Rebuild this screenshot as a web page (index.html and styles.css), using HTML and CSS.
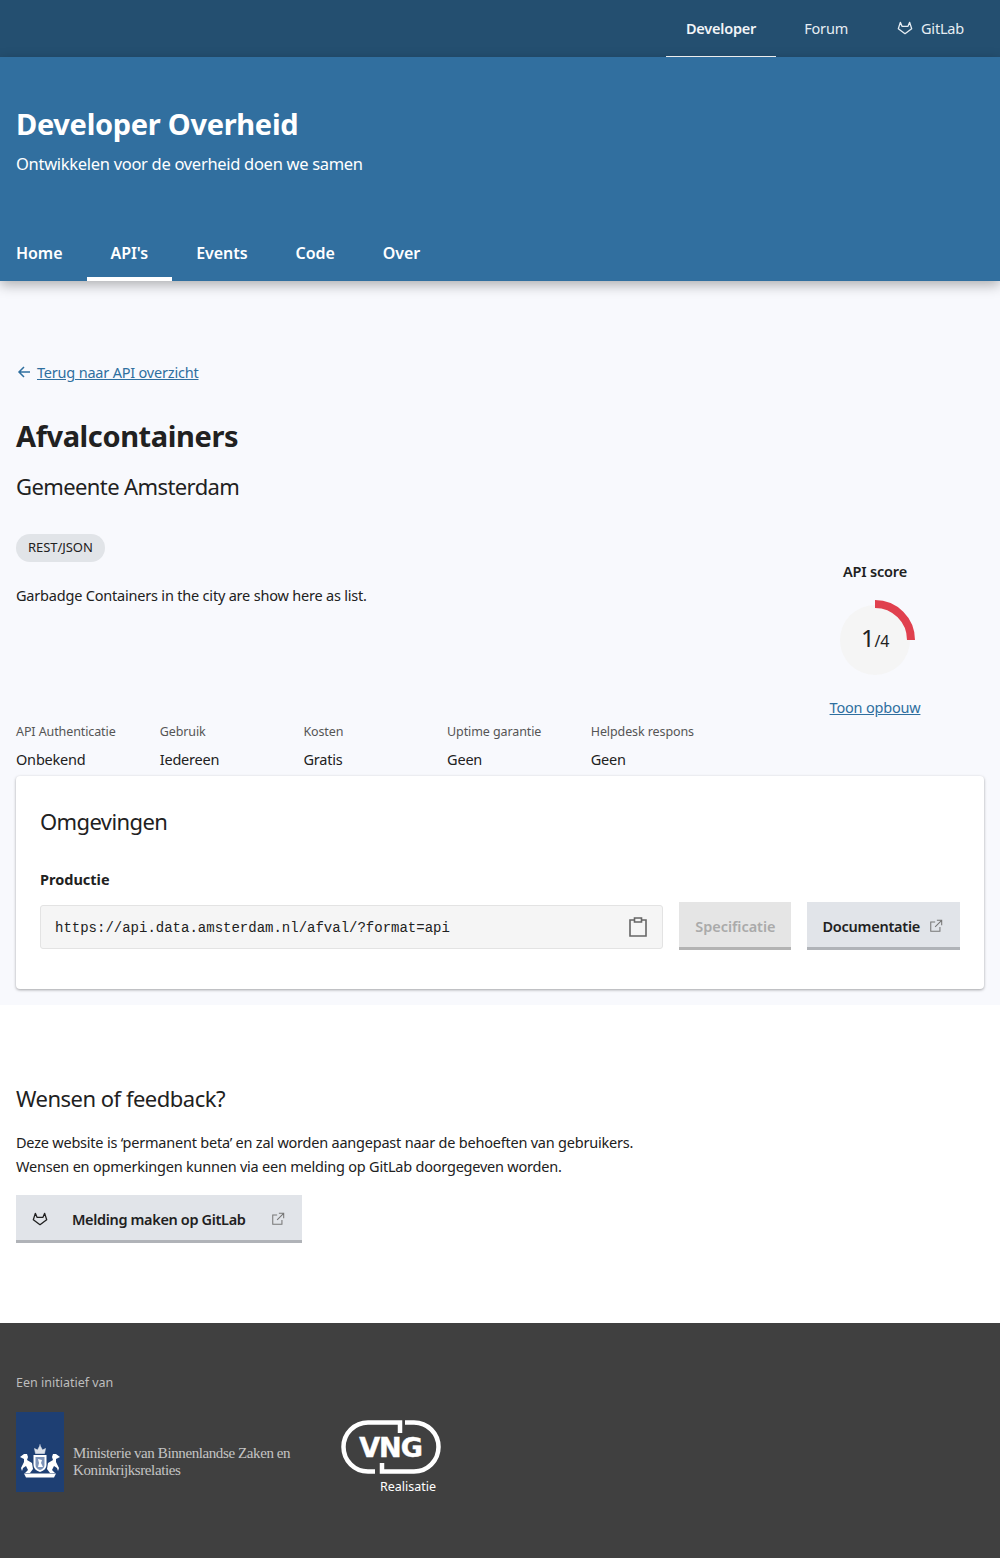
FILE: index.html
```html
<!DOCTYPE html>
<html>
<head>
  <title>Afvalcontainers - Developer Overheid</title>
  <link rel="stylesheet" href="styles.css">
</head>
<body>
  <svg class="defs" width="0" height="0">
    <symbol id="fox" viewBox="0 0 24 24">
      <path d="M5 3.5 L7.5 9.5 H16.5 L19 3.5 L22 13 L12 20.5 L2 13 Z" fill="none" stroke="currentColor" stroke-width="2" stroke-linejoin="round"/>
    </symbol>
    <symbol id="external" viewBox="0 0 16 16">
      <path d="M7 3.5 H2 V14 H12.5 V9 M9 1.5 H14.5 V7 M14.5 1.5 L7 9" fill="none" stroke="currentColor" stroke-width="1.2"/>
    </symbol>
  </svg>

  <div class="topbar">
    <a class="topbar-link active">Developer</a>
    <a class="topbar-link">Forum</a>
    <a class="topbar-link"><svg class="fox"><use href="#fox"/></svg>GitLab</a>
  </div>

  <header class="hero">
    <h1 class="site-title">Developer Overheid</h1>
    <p class="site-sub">Ontwikkelen voor de overheid doen we samen</p>
    <nav class="mainnav">
      <a class="mainnav-link">Home</a>
      <a class="mainnav-link active">API's</a>
      <a class="mainnav-link">Events</a>
      <a class="mainnav-link">Code</a>
      <a class="mainnav-link">Over</a>
    </nav>
  </header>

  <main class="content">
    <a class="back">
      <svg class="back-icon" viewBox="0 0 16 16"><path d="M14 8 H3 M8 3 L3 8 L8 13" fill="none" stroke="currentColor" stroke-width="1.5"/></svg>
      <span class="link">Terug naar API overzicht</span>
    </a>
    <h1 class="api-title">Afvalcontainers</h1>
    <h2 class="api-org">Gemeente Amsterdam</h2>

    <div class="summary">
      <div class="summary-left">
        <span class="pill">REST/JSON</span>
        <p class="desc">Garbadge Containers in the city are show here as list.</p>
      </div>
      <div class="score">
        <div class="score-title">API score</div>
        <div class="score-ring">
          <svg class="score-arc" viewBox="0 0 80 80"><circle cx="40" cy="40" r="35" fill="#f5f5f5"/><path d="M40 4 A36 36 0 0 1 76 40" fill="none" stroke="#e0404e" stroke-width="8"/></svg>
          <span class="score-num"><b>1</b>/4</span>
        </div>
        <a class="link score-link">Toon opbouw</a>
      </div>
    </div>

    <dl class="facts">
      <div class="fact"><dt>API Authenticatie</dt><dd>Onbekend</dd></div>
      <div class="fact"><dt>Gebruik</dt><dd>Iedereen</dd></div>
      <div class="fact"><dt>Kosten</dt><dd>Gratis</dd></div>
      <div class="fact"><dt>Uptime garantie</dt><dd>Geen</dd></div>
      <div class="fact"><dt>Helpdesk respons</dt><dd>Geen</dd></div>
    </dl>

    <section class="card">
      <h2 class="card-title">Omgevingen</h2>
      <h3 class="env-name">Productie</h3>
      <div class="env-row">
        <div class="url-box">
          <span class="url">https://api.data.amsterdam.nl/afval/?format=api</span>
          <svg class="clip" viewBox="0 0 18 20"><path d="M5.5 3 H1 V19 H17 V3 H12.5 M5.5 1 H12.5 V5 H5.5 Z" fill="none" stroke="currentColor" stroke-width="1.6"/></svg>
        </div>
        <a class="btn disabled">Specificatie</a>
        <a class="btn btn-doc">Documentatie<svg class="ext"><use href="#external"/></svg></a>
      </div>
    </section>
  </main>

  <section class="feedback">
    <h2 class="feedback-title">Wensen of feedback?</h2>
    <p class="feedback-text">Deze website is ‘permanent beta’ en zal worden aangepast naar de behoeften van gebruikers.<br>Wensen en opmerkingen kunnen via een melding op GitLab doorgegeven worden.</p>
    <a class="btn btn-wide"><svg class="fox"><use href="#fox"/></svg><span class="btn-label">Melding maken op GitLab</span><svg class="ext"><use href="#external"/></svg></a>
  </section>

  <footer class="footer">
    <p class="footer-intro">Een initiatief van</p>
    <div class="logos">
      <div class="rijk">
        <div class="rijk-flag">
          <svg class="arms" viewBox="0 0 42 36">
            <defs>
              <path id="lion" d="M1 13 L5 10 L8 10 L9 13 L8 16 L13 19 L14 25 L11 29 L6 29 L9 26 L7 22 L4 24 L3 27 L2 24 L5 18 L5 15 Z"/>
            </defs>
            <g fill="#fff">
              <path d="M21 0 V2 M16.5 9.5 L15.5 4.5 L18.5 6 L21 1.5 L23.5 6 L26.5 4.5 L25.5 9.5 Z" stroke="#fff" stroke-width="0.6" opacity="0.85"/>
              <path d="M14.5 11 H27.5 V21 Q27.5 26 21 28 Q14.5 26 14.5 21 Z"/>
              <use href="#lion"/>
              <use href="#lion" transform="matrix(-1 0 0 1 42 0)"/>
              <path d="M5 29.5 H37 L35 33.5 H7 Z"/>
            </g>
            <path d="M16.5 13 H25.5 V21 Q25.5 24.5 21 26 Q16.5 24.5 16.5 21 Z" fill="#7d93b8"/>
            <path d="M19 15 L23 16 L22 19 L24 23 L19 23 L20 19 Z" fill="#fff"/>
          </svg>
        </div>
        <div class="rijk-name">Ministerie van Binnenlandse Zaken en<br>Koninkrijksrelaties</div>
      </div>
      <div class="vng">
        <svg class="vng-mark" viewBox="0 0 100 54">
          <path d="M59 13 V2.5 H27 A24.5 24.5 0 0 0 27 51.5 H34 M64 2.5 H73 A24.5 24.5 0 0 1 73 51.5 H41 V43" fill="none" stroke="#fff" stroke-width="4.5"/>
          <text class="vng-text" x="49.5" y="37" text-anchor="middle">VNG</text>
        </svg>
        <div class="vng-name">Realisatie</div>
      </div>
    </div>
  </footer>
</body>
</html>
```

FILE: styles.css
```css
* {
  box-sizing: border-box;
}
body {
  margin: 0;
  font-family: "Noto Sans", "Liberation Sans", sans-serif;
  font-size: 14.5px;
  line-height: 24px;
  letter-spacing: -0.2px;
  color: #212121;
  background-color: #fff;
}
h1, h2, h3, p, dl, dd {
  margin: 0;
}
a {
  color: inherit;
  text-decoration: none;
}
.defs {
  position: absolute;
}
.link {
  color: #2f6f9f;
  text-decoration: underline;
}

/* top bar */
.topbar {
  display: flex;
  justify-content: flex-end;
  gap: 9px;
  height: 57px;
  padding-right: 16px;
  background-color: #244f70;
}
.topbar-link {
  display: flex;
  align-items: center;
  height: 57px;
  padding: 0 20px;
  color: #e6edf3;
  border-bottom: 1px solid transparent;
}
.topbar-link.active {
  margin-right: -1px;
  color: #f2f5f8;
  font-weight: 600;
  border-bottom-color: #fff;
}
.fox {
  width: 16px;
  height: 16px;
  margin-right: 8px;
}

/* hero */
.hero {
  height: 224px;
  padding: 47px 16px 0;
  color: #fff;
  background-color: #316f9f;
  box-shadow: 0 4px 12px rgba(0, 0, 0, 0.3);
  position: relative;
}
.site-title {
  font-size: 29px;
  line-height: 40px;
  font-weight: 700;
  letter-spacing: -0.3px;
}
.site-sub {
  margin-top: 8px;
  font-size: 16.5px;
  line-height: 24px;
  letter-spacing: -0.3px;
}
.mainnav {
  display: flex;
  margin: 52px 0 0 -24px;
}
.mainnav-link {
  display: block;
  height: 53px;
  padding: 0 24px;
  font-size: 16px;
  line-height: 50px;
  font-weight: 600;
  letter-spacing: -0.05px;
}
.mainnav-link.active {
  border-bottom: 4px solid #fff;
}

/* api detail */
.content {
  padding: 79px 16px 16px;
  background-color: #f8f9fd;
}
.back {
  display: flex;
  align-items: center;
  gap: 5px;
  height: 24px;
}
.back-icon {
  width: 16px;
  height: 16px;
  color: #2f6f9f;
}
.api-title {
  margin-top: 32px;
  font-size: 29px;
  line-height: 40px;
  font-weight: 700;
  letter-spacing: -0.4px;
}
.api-org {
  margin-top: 14px;
  font-size: 22px;
  line-height: 32px;
  font-weight: 400;
  letter-spacing: -0.6px;
}
.summary {
  display: flex;
  justify-content: space-between;
  height: 188px;
  margin-top: 32px;
}
.pill {
  display: inline-block;
  height: 28px;
  padding: 0 12px;
  border-radius: 14px;
  font-size: 13px;
  line-height: 26px;
  letter-spacing: -0.05px;
  background-color: #e1e4e8;
}
.desc {
  margin-top: 21px;
}
.score {
  width: 218px;
  padding-top: 25px;
  text-align: center;
}
.score-title {
  font-weight: 600;
}
.score-ring {
  position: relative;
  width: 80px;
  height: 80px;
  margin: 17px auto 0;
}
.score-arc {
  display: block;
  width: 80px;
  height: 80px;
}
.score-num {
  position: absolute;
  top: -2px;
  left: 0;
  width: 80px;
  line-height: 80px;
  font-size: 16px;
}
.score-num b {
  font-size: 24px;
  font-weight: 400;
}
.score-link {
  display: block;
  margin-top: 15px;
}
.facts {
  display: flex;
  height: 54px;
}
.fact {
  width: 143.7px;
}
.fact dt {
  font-size: 12.5px;
  line-height: 20px;
  letter-spacing: -0.1px;
  color: #555;
}
.fact dd {
  margin-top: 5px;
}

/* card */
.card {
  height: 213px;
  padding: 24px;
  border-radius: 4px;
  background-color: #fff;
  box-shadow: 0 1px 3px rgba(0, 0, 0, 0.35);
}
.card-title {
  font-size: 22px;
  line-height: 42px;
  font-weight: 400;
  letter-spacing: -0.6px;
}
.env-name {
  margin-top: 25px;
  font-size: 14.5px;
  font-weight: 700;
  letter-spacing: 0;
}
.env-row {
  display: flex;
  align-items: flex-start;
  gap: 16px;
  margin-top: 11px;
}
.url-box {
  display: flex;
  align-items: center;
  justify-content: space-between;
  flex: 1;
  height: 44px;
  margin-top: 3px;
  padding: 0 15px 0 14px;
  border: 1px solid #e3e3e3;
  border-radius: 3px;
  background-color: #f5f5f5;
}
.url {
  padding-top: 2px;
  font-family: "Liberation Mono", monospace;
  font-size: 14px;
  letter-spacing: 0;
}
.clip {
  width: 18px;
  height: 20px;
  color: #666;
}
.btn {
  display: flex;
  align-items: center;
  height: 48px;
  padding: 2px 16px 0;
  font-weight: 600;
  letter-spacing: -0.25px;
  border-bottom: 3px solid #b0b3b8;
  background-color: #e1e4e9;
}
.btn.disabled {
  color: #aaa;
  letter-spacing: -0.05px;
  border-bottom-color: #b3b3b3;
  background-color: #e5e5e5;
}
.btn-doc {
  padding-left: 15px;
  padding-right: 17px;
}
.ext {
  width: 14px;
  height: 14px;
  margin-left: 9px;
  color: #777;
}

/* feedback */
.feedback {
  height: 318px;
  padding: 77px 16px 0;
}
.feedback-title {
  font-size: 22px;
  line-height: 32px;
  font-weight: 400;
  letter-spacing: -0.5px;
}
.feedback-text {
  margin-top: 16px;
  letter-spacing: -0.22px;
}
.btn-wide {
  display: inline-flex;
  margin-top: 17px;
  width: 286px;
  padding-right: 17px;
  letter-spacing: -0.35px;
}
.btn-wide .fox {
  margin: 0 24px 0 0;
}
.btn-label {
  flex: 1;
}

/* footer */
.footer {
  height: 235px;
  padding: 48px 16px 0;
  color: #bdbdbd;
  background-color: #404040;
}
.footer-intro {
  font-size: 12.5px;
  letter-spacing: 0;
}
.logos {
  display: flex;
  margin-top: 17px;
}
.rijk {
  display: flex;
  align-items: center;
  width: 325px;
  height: 80px;
}
.rijk-flag {
  display: flex;
  align-items: flex-end;
  justify-content: center;
  flex: none;
  width: 48px;
  height: 80px;
  padding-bottom: 12px;
  background-color: #1e3f73;
}
.arms {
  width: 42px;
  height: 36px;
}
.rijk-name {
  margin: 20px 0 0 9px;
  font-family: "Liberation Serif", serif;
  font-size: 15px;
  line-height: 17px;
  letter-spacing: -0.4px;
  color: #c4c4c4;
}
.vng {
  width: 100px;
  margin-top: 8px;
  color: #fff;
}
.vng-mark {
  display: block;
  width: 100px;
  height: 54px;
}
.vng-text {
  font-family: "DejaVu Sans", sans-serif;
  font-size: 27px;
  font-weight: 700;
  fill: #fff;
  stroke: #fff;
  stroke-width: 0.5;
  letter-spacing: -1px;
}
.vng-name {
  margin-top: 1px;
  padding-left: 39px;
  white-space: nowrap;
  font-size: 12.5px;
  line-height: 24px;
  letter-spacing: 0;
}
```
